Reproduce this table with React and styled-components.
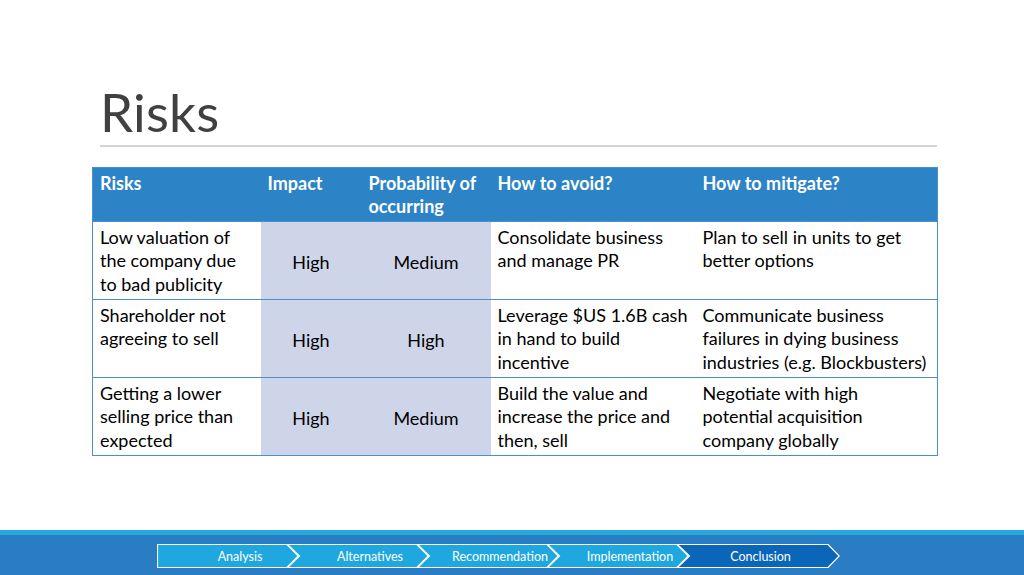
import styled, { createGlobalStyle } from "styled-components"

const GlobalStyle = createGlobalStyle`
    html, body {
        margin: 0;
        padding: 0;
        background: #ffffff;
    }

    body {
        font-family: Lato, "Open Sans", "Liberation Sans", sans-serif;
        width: 1024px;
        height: 575px;
        overflow: hidden;
    }
`

const Slide = styled.div`
    width: 1024px;
    height: 575px;
    display: flex;
    flex-direction: column;
`

const Content = styled.main`
    flex: 1;
    padding: 85px 87px 0 92px;
`

const Title = styled.h1`
    margin: 0 0 0 8px;
    font-size: 53px;
    line-height: 54px;
    font-weight: 400;
    color: #404040;
    letter-spacing: 0.2px;
`

const Rule = styled.hr`
    margin: 6px 0 0 8px;
    border: none;
    height: 2px;
    background: #d4d4d4;
`

const Table = styled.table`
    margin-top: 20px;
    width: 845px;
    border-collapse: collapse;
    table-layout: fixed;
    font-size: 18px;
    line-height: 23.4px;
    color: #000000;
    border: 1px solid #4a90d0;
`

const HeadRow = styled.tr`
    height: 54px;
    background: #2c83c5;
`

const HeadCell = styled.th`
    padding: 4px 7px 0;
    text-align: left;
    vertical-align: top;
    font-weight: 700;
    color: #ffffff;
`

const Row = styled.tr`
    height: 78px;
    border-top: 1px solid #4a90d0;
`

const Cell = styled.td`
    padding: 4px 7px 0;
    vertical-align: ${(p) => (p.$rating ? "middle" : "top")};
    text-align: ${(p) => (p.$rating ? "center" : "left")};
    background: ${(p) => (p.$rating ? "#cfd5e8" : "#ffffff")};
`

const Footer = styled.footer`
    height: 40px;
    border-top: 5px solid #29a8de;
    background: #2b7dc3;
    display: flex;
    align-items: center;
    padding-left: 157px;
`

const Crumbs = styled.nav`
    display: flex;
    height: 24px;
    margin-top: 2px;
`

const Crumb = styled.div`
    position: relative;
    width: ${(p) => p.$width}px;
    height: 24px;
    margin-left: ${(p) => (p.$first ? 0 : -12)}px;
    padding-left: ${(p) => p.$shift}px;
    box-sizing: border-box;
    display: flex;
    align-items: center;
    justify-content: center;
    font-size: 12.5px;
    color: #ffffff;

    & svg {
        position: absolute;
        left: 0;
        top: 0;
    }

    & span {
        position: relative;
    }
`

const columns = [
    { label: "Risks", width: 168 },
    { label: "Impact", width: 101 },
    { label: "Probability of occurring", width: 129 },
    { label: "How to avoid?", width: 205 },
    { label: "How to mitigate?", width: 242 },
]

const risks = [
    {
        risk: "Low valuation of the company due to bad publicity",
        impact: "High",
        probability: "Medium",
        avoid: "Consolidate business and manage PR",
        mitigate: "Plan to sell in units to get better options",
    },
    {
        risk: "Shareholder not agreeing to sell",
        impact: "High",
        probability: "High",
        avoid: "Leverage $US 1.6B cash in hand to build incentive",
        mitigate: "Communicate business failures in dying business industries (e.g. Blockbusters)",
    },
    {
        risk: "Getting a lower selling price than expected",
        impact: "High",
        probability: "Medium",
        avoid: "Build the value and increase the price and then, sell",
        mitigate: "Negotiate with high potential acquisition company globally",
    },
]

const steps = [
    { label: "Analysis", width: 142, shift: 24 },
    { label: "Alternatives", width: 142, shift: 24 },
    { label: "Recommendation", width: 142, shift: 24 },
    { label: "Implementation", width: 142, shift: 24 },
    { label: "Conclusion", width: 163, shift: 4, active: true },
]

function Chevron({ width, first, active }) {
    const w = width
    const notch = first ? "" : " L12.5,12"
    const d = `M0.5,0.5 H${w - 12} L${w - 0.8},12 L${w - 12},23.5 H0.5${notch} Z`
    return (
        <svg width={w} height="24" viewBox={`0 0 ${w} 24`}>
            <path d={d} fill={active ? "#0b66ba" : "#1fa7e0"} stroke="#ffffff" strokeWidth="1.2" strokeLinejoin="miter" />
        </svg>
    )
}

export default function App() {
    return (
        <>
            <GlobalStyle />
            <Slide>
                <Content>
                    <Title>Risks</Title>
                    <Rule />
                    <Table>
                        <colgroup>
                            {columns.map((c) => (
                                <col key={c.label} style={{ width: c.width }} />
                            ))}
                        </colgroup>
                        <thead>
                            <HeadRow>
                                {columns.map((c) => (
                                    <HeadCell key={c.label}>{c.label}</HeadCell>
                                ))}
                            </HeadRow>
                        </thead>
                        <tbody>
                            {risks.map((r) => (
                                <Row key={r.risk}>
                                    <Cell>{r.risk}</Cell>
                                    <Cell $rating>{r.impact}</Cell>
                                    <Cell $rating>{r.probability}</Cell>
                                    <Cell>{r.avoid}</Cell>
                                    <Cell>{r.mitigate}</Cell>
                                </Row>
                            ))}
                        </tbody>
                    </Table>
                </Content>
                <Footer>
                    <Crumbs>
                        {steps.map((s, i) => (
                            <Crumb key={s.label} $width={s.width} $first={i === 0} $shift={s.shift}>
                                <Chevron width={s.width} first={i === 0} active={s.active} />
                                <span>{s.label}</span>
                            </Crumb>
                        ))}
                    </Crumbs>
                </Footer>
            </Slide>
        </>
    )
}
